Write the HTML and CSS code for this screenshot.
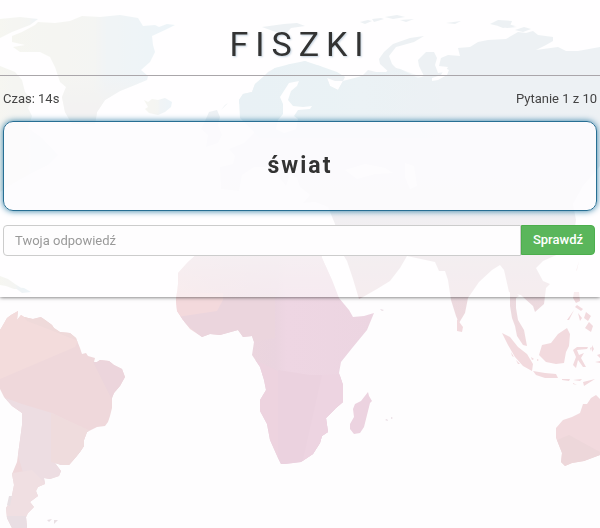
FILE: index.html
```html
<!DOCTYPE html>
<html lang="pl">
<head>
<meta charset="utf-8">
<meta name="viewport" content="width=device-width, initial-scale=1">
<title>Fiszki</title>
<link rel="stylesheet" href="styles.css">
</head>
<body>
<svg class="map" viewBox="0 0 600 528" preserveAspectRatio="xMidYMin slice" aria-hidden="true">
  <defs>
    <linearGradient id="north" x1="0" x2="1" y1="0" y2="0">
      <stop offset="0" stop-color="#ecece3"/><stop offset=".5" stop-color="#e9eae6"/><stop offset=".58" stop-color="#e1e8ec"/><stop offset="1" stop-color="#dae9f1"/>
    </linearGradient>
    <linearGradient id="greenlandFade" x1="0" x2="0" y1="0" y2="1">
      <stop offset=".25" stop-color="#e6e5e4" stop-opacity="0"/><stop offset=".7" stop-color="#e6e5e4"/>
    </linearGradient>
    <linearGradient id="asia" gradientUnits="userSpaceOnUse" x1="0" y1="60" x2="0" y2="350">
      <stop offset="0" stop-color="#dae2e8"/><stop offset=".3" stop-color="#dce2e9"/><stop offset=".55" stop-color="#e3dfe4"/><stop offset=".8" stop-color="#ebdadf"/><stop offset="1" stop-color="#f1d9dd"/>
    </linearGradient>
    <linearGradient id="nordic" gradientUnits="userSpaceOnUse" x1="240" y1="0" x2="480" y2="0">
      <stop offset="0" stop-color="#d2e3ea"/><stop offset=".5" stop-color="#d6e4ea"/><stop offset="1" stop-color="#d6e4ea" stop-opacity="0"/>
    </linearGradient>
    <linearGradient id="africa" gradientUnits="userSpaceOnUse" x1="176" y1="0" x2="374" y2="0">
      <stop offset="0" stop-color="#f3d9dc"/><stop offset=".25" stop-color="#ecd6dd"/><stop offset=".5" stop-color="#ead4df"/><stop offset=".56" stop-color="#eed6e3"/><stop offset="1" stop-color="#ecd5e1"/>
    </linearGradient>
    <linearGradient id="saharaFade" gradientUnits="userSpaceOnUse" x1="0" y1="250" x2="0" y2="300">
      <stop offset="0" stop-color="#ebe0e5"/><stop offset="1" stop-color="#ebdae2" stop-opacity="0"/>
    </linearGradient>
    <clipPath id="southAmericaShape"><path d="M0 330L3 325 7 318 11 315 18 311 17 320 21 315 24 317 33 319 41 317 48 322 52 325 54 328 60 332 70 333 76 338 80 348 82 354 86 353 88 356 95 358 94 362 97 362 100 360 109 361 114 365 122 369 125 377 120 386 114 393 112 398 112 408 110 416 108 422 105 426 97 427 87 432 84 440 84 446 80 452 76 457 69 465 61 465 55 463 61 471 59 476 50 479 44 478 45 484 38 487 36 491 38 496 30 502 34 507 28 513 26 517 27 528 12 528 7 518 6 508 11 500 14 485 12 474 17 462 20 440 22 425 22 413 12 406 4 397 0 389z"/></clipPath>
    <clipPath id="africaShape"><path d="M206 246l-10 9-8 7-10 11v11l-2 16 1 11 6 9 7 9 12 8 8-3 10 1 18-5 5 7 9-1 2 6-2 13 8 12 4 13 2 10-6 10v11l7 13 3 16 8 18 3 6h4l16-2 12-8 7-11 2-7 6-4-2-14 10-10 7-6v-17l-4-12 2-11 12-15 14-17 7-17-10 3-11 1-4-7-10-12-7-18-10-22-2-12-30-4-25-4z"/></clipPath>
  </defs>

  <g fill="url(#north)">
    <path d="M12 36l10-4 13-7 3-3 17 1 15-2 12-5 18 1 20-2 18 3 5 8 12-1 4 2 8-3 8 1-10 5-13 6 1 9 2 7-5 10-9 8 7 6-1 4-12 5-15 6-15 9-8 12-2 12H72l-7-12-3-15 4-10-6-5-5-15-5-10-10-5-20 0-7-5 12-2-13-3z"/>
    <path d="M38 19l-8 6-18 7-12 6V19l20-2zM0 66l15 6 7 8 3 12 7 8-4 8 4 8-4 12 14 10 16 17-10 10-16 8-18 10-14 9z"/>
    <path d="M144 100l4 2 4-3 6 1 7-2 7 4-1 5-6 5-7 3-9-2-4-4 3-2z"/>
    <path d="M0 276l8 3 7 5 8 5-9 0-8-3-6-1zM14 287l10 1 7 4-9 1z"/>
  </g>
  <path fill="url(#greenlandFade)" d="M55 65l15-2 75-2 5 1-9 8 7 6-1 4-12 5-15 6-15 9-8 12-2 12H72l-7-12-3-15 4-10-6-5z"/>

  <g fill="url(#asia)">
    <path d="M239 100l4-6 9-2 3-8 7-6 6-6 7-4 8-1 7-3 6 0 9-3 6 3 9 2 8 5 8 2 9 4-2 4-8 0-8-3 3 8 8 4 5-9 9-1 10-4 6-6 8 2 10 0 6-5 8 2 18 9 6-2-5-10-1-6 8-8h8l3 6-2 7 3 8 7-1 3-5-9-1 2-8 7-3 12 1-2-8 12-1 8-5 10-2 18-1 12-7 8 1 7-2 5 4 15 2 0 4-7 4-10 5 22-3 8 4 12 0 22-4v119l-17 20-10 18 3 16-3 18-10 14-20 9-7 7 7 13 7 3-4 4-2 16-9 8-2-6-10-9-2-2-6-1-6-2-5-22-4-5-8 5-13 12-11 16-3 15-6 10-3-7-5-16-3-20-3-9-6 0-4-9-28-6-7 12-10 13-13 8-14 8-4 2-6-20-6-18-8-13-4-24-7-17-13-5-12 1 7-8-10-8-3-9-7-4-4 12-8-10-12-9-12 0-12 8-3 16-18-2-1-22 13-3 2-8-6-7 15-6 10-10 4-14 0-8-14-1-5-7z"/>
    <path d="M510 286l9 10-3 2 0 10 2 12 6 10 3 16-4-1-6-9-2-10-3-8-2-12z"/>
    <path d="M209 112l8-2 3 7-2 8 4 10-4 8-12 4 2-12-7-6 4-8zM228 103l-5 5-2 2 4-5z"/>
    <path d="M380 64l-1-5 5-7 9-8 17-6 14-2-10 6-18 5-7 9 3 8 9 9-11 0z"/>
    <path d="M262 27l22-3 13-1 8 3-14 2-6 7-12-4zM360 22l8-2 4 1-7 3zM372 19l9-1 3 1-10 3zM385 17l12-2 8 2-12 2zM400 20l14-1-8 3zM446 23l15-2-6 3zM490 24l8-4 14 1-2 5 7 1-10 1zM498 26l10-2 7 2-12 2zM515 30l9-3 7 2-8 3z"/>
  </g>
  <path fill="url(#nordic)" d="M239 100l4-6 9-2 3-8 7-6 13-10 15-4 15-3 15 5 17 6 8 5-18 1 3 8 8 4 5-9 19-5 14-4 10 0 14-3 24 9 16 0v60H260l-20-20z"/>
  <g class="sea">
    <path d="M289 83l10-2-2 5-6 5-3 9 5 6 10 1 9-1-2 3-12 1-4 6 4 3-2 10-12 4-8-4 2-9 5-6 0-10-3-7z"/>
    <path d="M432 78l9-3 4-7 4 2-2 5-9 5-6 1z"/>
    <path d="M345 170l20-6 20 4 8 5-18 1-18 5zM405 163l9 3 3 20-7 3-5-12z"/>
  </g>

  <g clip-path="url(#africaShape)">
    <path fill="url(#africa)" d="M170 240h210v230H170z"/>
    <path fill="#f3d9dc" d="M170 293h53v20l-45 8z"/>
    <path fill="#ebd5dd" d="M177 317l40-6 7-13 36-3 15-2v45l-60 10z"/>
    <path fill="#ebd2df" d="M278 370l32 5 40 0v90H278z"/>
    <path fill="#edd4e1" d="M322 375l25-1v50l-40 40h-5z"/>
    <path fill="#edd3df" d="M255 360l23 11 0 94-18-34z"/>
    <path fill="url(#saharaFade)" d="M170 240h210v60H170z"/>
  </g>
  <path fill="#ecd3e0" d="M368 392l1 4 3 5-2 2-3 12-3 12-4 6-6 1-4-5 0-5 4-7-1-8 2-5 6-3z"/>
  <path fill="#e8dbe2" d="M380 309l4 1-2 1zM385 420l2-1 1 2zM391 417l2 1-2 1z"/>

  <g clip-path="url(#southAmericaShape)">
    <path fill="#efd8db" d="M0 300h130v228H0z"/>
    <path fill="#f3dcdc" d="M0 300h15l14 21 49 20-3 6L0 379z"/>
    <path fill="#efdada" d="M18 310l62 20-3 10-50-19z"/>
    <path fill="#ecd5dc" d="M93 362l12-5 30 20-22 25z"/>
    <path fill="#eddde2" d="M0 396l22 8 30 9 36 18 0 38-60 20z"/>
    <path fill="#efdcdd" d="M51 413l38 17-6 40-32-8z"/>
    <path fill="#f0dfe2" d="M0 475l32-5 20 20-24 38H0z"/>
    <path fill="#e9dee3" d="M5 516l24 0v14H5z"/>
  </g>
  <path fill="#e8dfe3" d="M9 496l3 0-2 10-3-1zM47 520l5-1-3 3zM54 520l4 0-4 4z"/>

  <g fill="#f2dade">
    <path d="M502 333l8 4 8 10 9 7 6 10-1 7-9-5-8-9-7-12zM533 371l12 2 11 1 2 4-13 0-9-3zM542 345l9-2 7-9 9-6 3 6-1 12-3 6-2 11-8 1-10-2-7-7z"/>
    <path d="M573 350l4-3 11 0-1 2-10 1 2 5 5-2-3 5 5 9-3 0-5-7-2 8-3-3 3-8zM562 379l8 0-1 2-7-1zM573 380l9-1-2 2zM583 382l12-3-11 7zM573 383l4 2-4-1z"/>
    <path d="M574 292l5 0 1 9-4 2-3-5zM577 305l6 4-2 2-6-4zM567 320l7-10-5 10zM586 312l5 4-3 5-4-3zM589 322l4 4-2 6-6-4 2-3zM578 313l4 5-2 3zM576 271l3-10-2 9z"/>
    <path d="M457 319l6 8-1 5-5-1zM511 352l3 5-2-1zM516 360l4 4-2 0zM531 357l3 2-2 1zM537 359l2 1-2 1zM592 345l2 4-2 3zM597 355l3-1v4zM595 362l5-1v2zM590 348l2-1-1 4z"/>
    <path d="M556 428l7-8 9-3 8-4 3-9 4 0 4-6 5-3 4 4v56l-16 6-12 2-7 3-4-4 1-9-6-15 0-5z"/>
  </g>
  <path fill="#edd7da" d="M557 440l12-5 31 17v3l-16 6-12 2-7 3-4-4 1-9z"/>
</svg>

<main class="panel">
  <header class="header">
    <h1 class="title">FISZKI</h1>
  </header>
  <section class="quiz">
    <div class="status">
      <span>Czas: 14s</span>
      <span>Pytanie 1 z 10</span>
    </div>
    <div class="card">świat</div>
    <form class="answer">
      <input class="answer-input" type="text" placeholder="Twoja odpowiedź" aria-label="Twoja odpowiedź">
      <button class="answer-button" type="button">Sprawdź</button>
    </form>
  </section>
</main>
</body>
</html>
```
FILE: styles.css
```css
* {
  box-sizing: border-box;
}

body {
  margin: 0;
  min-height: 100vh;
  background: #fefdfe;
  color: #333;
  font: 13px/20px Roboto, "Liberation Sans", sans-serif;
}

.map {
  position: fixed;
  inset: 0;
  z-index: -1;
  width: 100%;
  height: 100%;
}

.sea {
  fill: #fefdfe;
}

.panel {
  padding-bottom: 41px;
  background: rgba(255, 255, 255, 0.5);
  box-shadow: 0 0 4px rgba(0, 0, 0, 0.7);
}

.header {
  padding: 24px 0 11px;
  border-bottom: 1px solid #aaa6aa;
}

.title {
  margin: 0;
  font-size: 34px;
  font-weight: 400;
  line-height: 40px;
  letter-spacing: 7px;
  text-align: center;
  text-shadow: 1px 1px 2px rgba(60, 110, 150, 0.3);
}

.quiz {
  padding: 13px 3px 0;
}

.status {
  display: flex;
  justify-content: space-between;
  color: #444;
}

.card {
  margin: 12px 0 14px;
  padding: 28px 12px;
  border: 1px solid #286f94;
  border-radius: 10px;
  background: rgba(253, 252, 254, 0.85);
  box-shadow: 0 0 6px #2f7ea5;
  font-size: 23px;
  font-weight: 700;
  line-height: 32px;
  letter-spacing: 2px;
  text-align: center;
}

.answer {
  display: flex;
  padding-right: 2px;
}

.answer-input {
  flex: 1;
  min-width: 0;
  height: 31px;
  padding: 0 11px;
  border: 1px solid #ccc;
  border-radius: 4px 0 0 4px;
  background: #fefdfe;
  color: #555;
  font: inherit;
}

.answer-input::placeholder {
  color: #999;
  opacity: 1;
}

.answer-button {
  height: 30px;
  padding: 0 11px;
  border: 1px solid #4cae4c;
  border-radius: 0 4px 4px 0;
  background: #5ab65b;
  color: #fff;
  font: inherit;
  font-weight: 500;
}
```
